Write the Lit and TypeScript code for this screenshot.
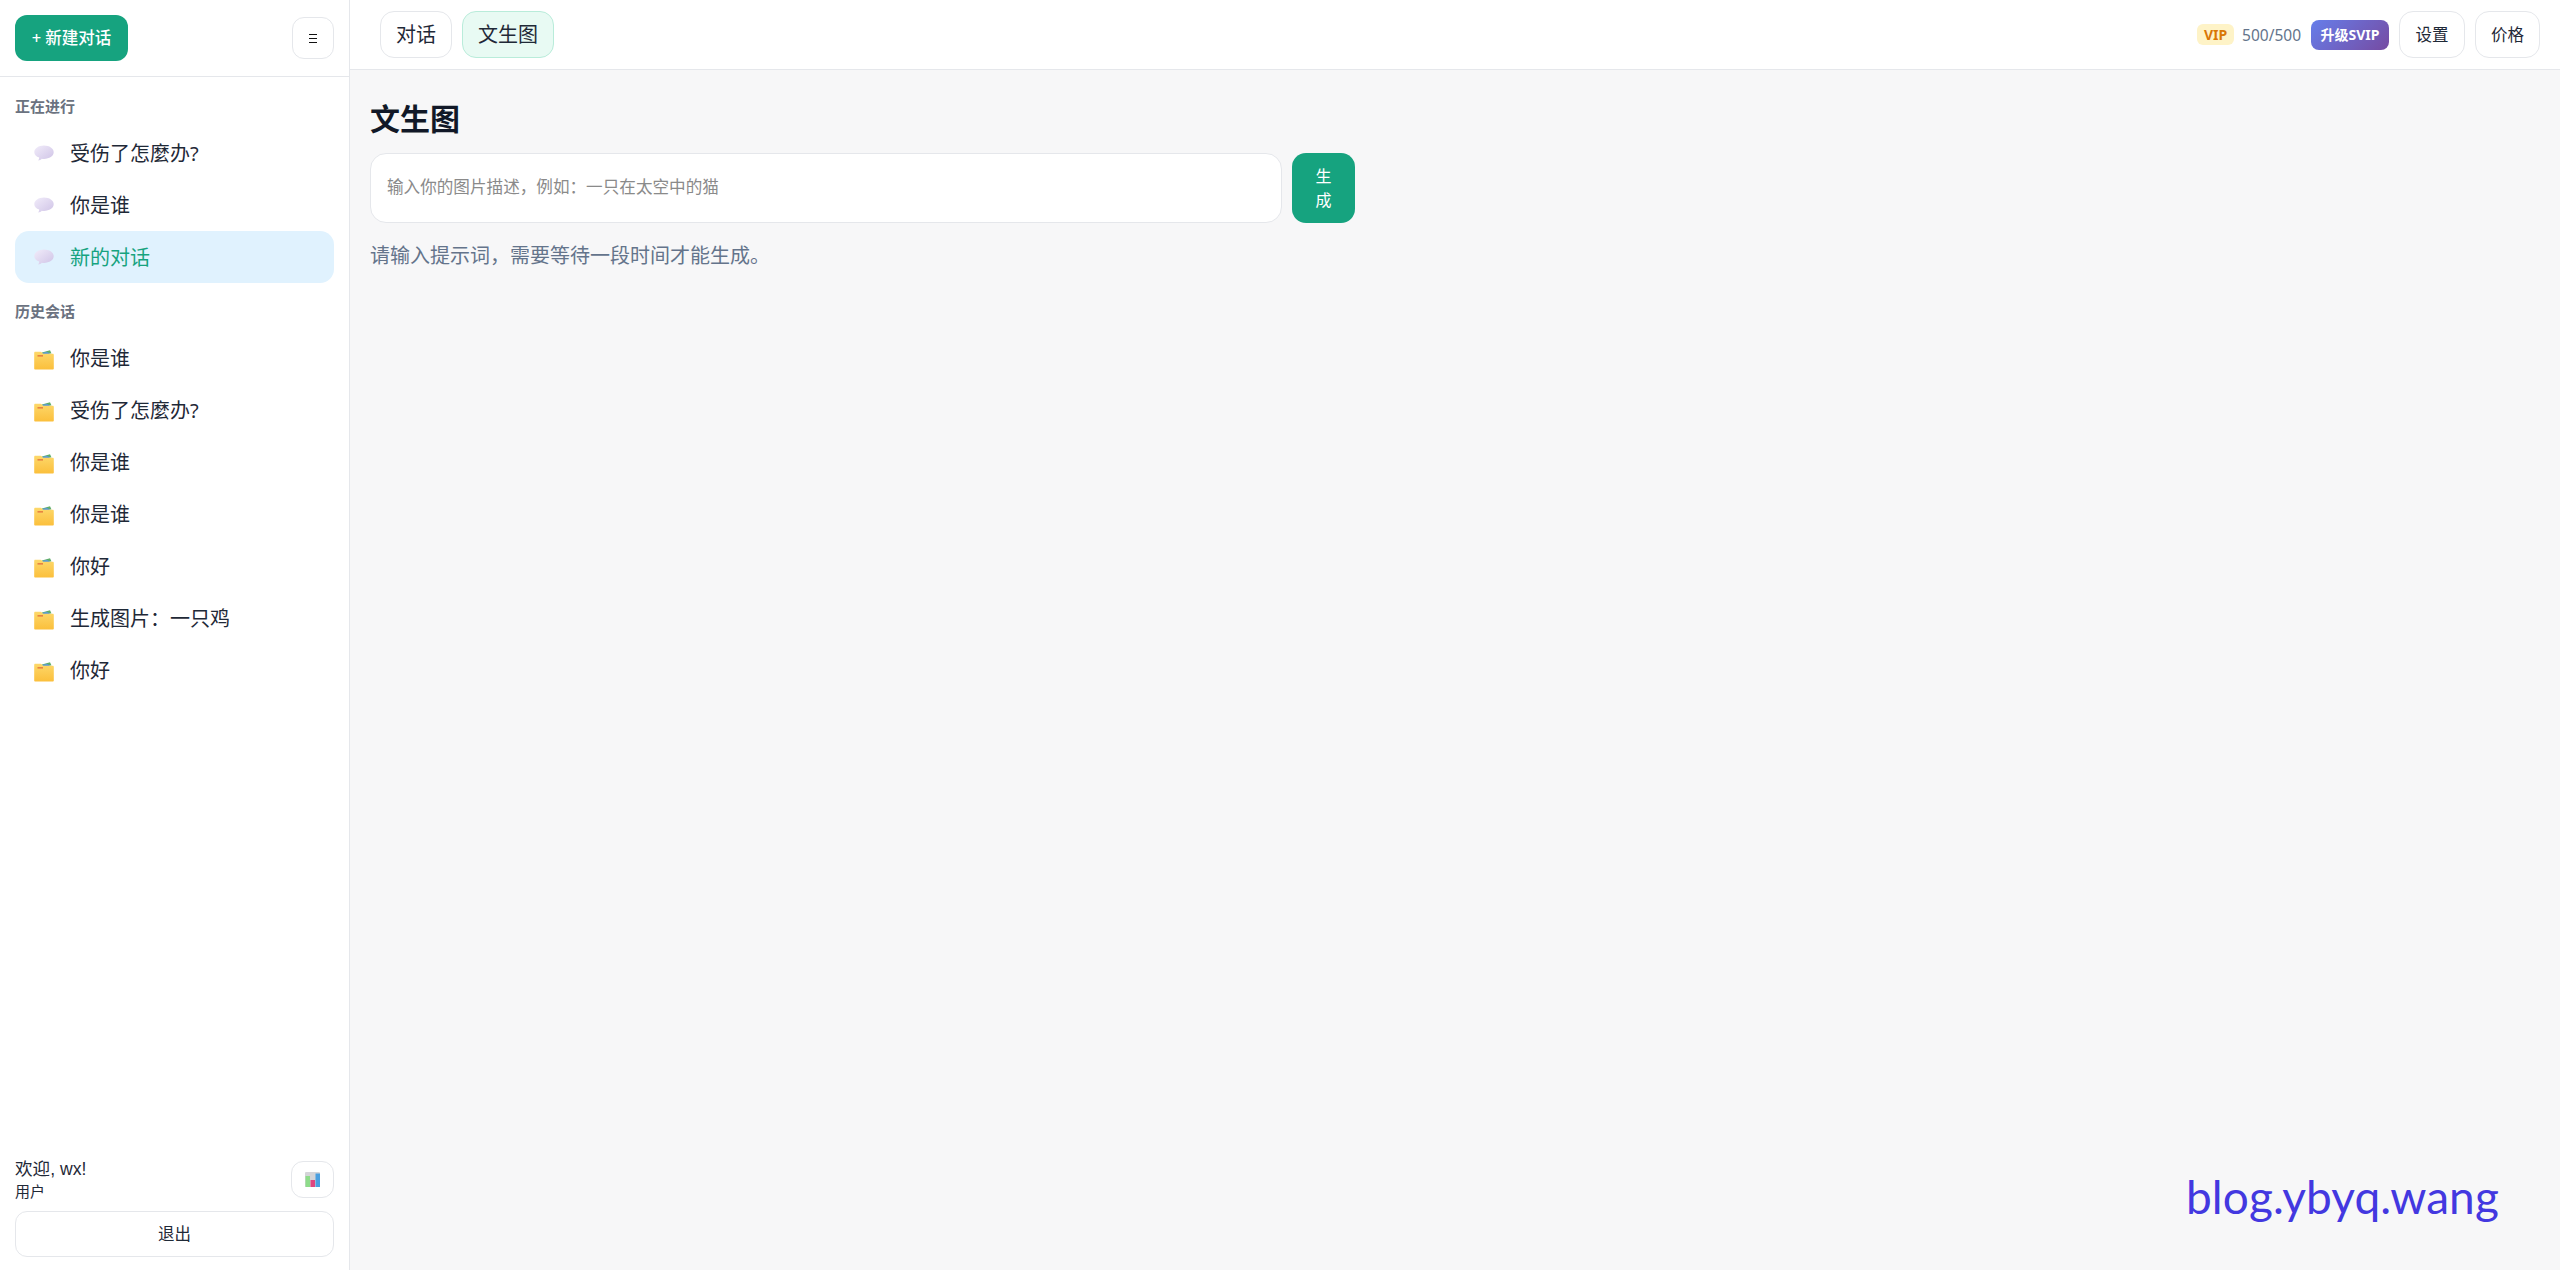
import { LitElement, html, css, svg } from "lit";
import { customElement } from "lit/decorators.js";

const bubble = html`<svg class="ico" viewBox="0 0 20 20"><defs><linearGradient id="bb" x1="0" y1="0" x2="1" y2="1"><stop offset="0" stop-color="#f1ecfa"/><stop offset="1" stop-color="#cfc3e6"/></linearGradient></defs><path d="M10 2.600c5.300 0 9.700 2.900 9.700 6.700s-4.400 6.600-9.700 6.600c-.8 0-1.500-.1-2.200-.2-.9 1-2.200 1.700-3.600 1.800.6-.8 1-1.700 1-2.900C2.400 13.700.3 11.600.3 9.300.3 5.500 4.700 2.600 10 2.600z" fill="url(#bb)"/></svg>`;

const folder = html`<svg class="ico folder" viewBox="0 0 20 20"><defs><linearGradient id="ff" x1="0" y1="0" x2="0" y2="1"><stop offset="0" stop-color="#fdd86a"/><stop offset="1" stop-color="#fbbf3c"/></linearGradient></defs><path d="M8 2.500 L16 .3 l1.500 3.200H8z" fill="#5fae6a"/><path d="M7 3.200 L13 1.800 l3.500 2.200H7z" fill="#5b9bd5"/><path d="M1.200 1.800h5.400c.6 0 1 .2 1.300.6l1.200 1.400h9.600c.7 0 1.100.5 1.100 1.200v13.400c0 .7-.5 1.100-1.200 1.100H1.400c-.7 0-1.200-.4-1.200-1.100V2.900c0-.6.400-1.100 1-1.100z" fill="url(#ff)"/><rect x="3.500" y="5.200" width="5.500" height="1.300" fill="#e2703a"/></svg>`;

const chart = svg`<rect x="0" y="0" width="15" height="15" rx="1" fill="#d4d4d8"/><rect x="0.500" y="4" width="4.500" height="11" fill="#8edc8a"/><rect x="5.500" y="8" width="4.500" height="7" fill="#e0457f"/><rect x="10.500" y="1.500" width="4.500" height="13.500" fill="#4a9fe0"/>`;

@customElement("app-root")
export class AppRoot extends LitElement {
  static styles = css`
    :host {
      display: block;
      height: 100vh;
      font-family: "Noto Sans", "Noto Sans CJK SC", sans-serif;
      color: #1f2937;
    }
    * { box-sizing: border-box; }
    .app { display: flex; height: 100%; position: relative; background: #f7f7f8; }
    .side {
      width: 350px;
      flex: none;
      background: #fff;
      border-right: 1px solid #e5e7eb;
      display: flex;
      flex-direction: column;
    }
    .side-head {
      height: 77px;
      padding: 15px 15px 0;
      border-bottom: 1px solid #e5e7eb;
      display: flex;
      justify-content: space-between;
      align-items: flex-start;
    }
    .new {
      width: 113px;
      height: 46px;
      border-radius: 12px;
      background: #16a37f;
      color: #fff;
      font-size: 16.500px;
      font-weight: 500;
      line-height: 45px;
      text-align: center;
    }
    .menu {
      width: 42px;
      height: 42px;
      margin-top: 2px;
      border: 1px solid #e5e7eb;
      border-radius: 12px;
      display: flex;
      flex-direction: column;
      gap: 3px;
      align-items: center;
      justify-content: center;
    }
    .menu i { display: block; width: 8px; height: 1px; background: #111; }
    .lists { flex: 1; padding: 17px 15px 0; }
    .label {
      font-size: 15px;
      line-height: 24px;
      font-weight: 700;
      color: #6b7280;
      margin-bottom: 9px;
    }
    .group { margin-bottom: 16px; }
    .row {
      height: 52px;
      border-radius: 14px;
      padding-left: 19px;
      display: flex;
      align-items: center;
      gap: 16px;
      font-size: 20px;
      line-height: 51px;
    }
    .row.on { background: #e0f2fe; color: #16a37f; }
    .ico { width: 20px; height: 20px; flex: none; }
    .folder { margin-top: 3px; }
    .foot { padding: 0 15px 13px; }
    .user { display: flex; justify-content: space-between; align-items: center; margin-bottom: 11px; }
    .hello { font-family: "Liberation Sans", "Noto Sans CJK SC", sans-serif; font-size: 17.600px; line-height: 22px; }
    .role { font-size: 15px; line-height: 18px; margin-top: 2px; }
    .stat {
      width: 43px;
      height: 37px;
      border: 1px solid #e5e7eb;
      border-radius: 12px;
      display: flex;
      align-items: center;
      justify-content: center;
    }
    .stat svg { width: 15px; height: 15px; }
    .logout {
      height: 46px;
      border: 1px solid #e5e7eb;
      border-radius: 12px;
      line-height: 44px;
      text-align: center;
      font-size: 16.500px;
    }
    .main { flex: 1; display: flex; flex-direction: column; min-width: 0; }
    .top {
      height: 70px;
      background: #fff;
      border-bottom: 1px solid #e5e7eb;
      padding: 0 20px 0 30px;
      display: flex;
      align-items: center;
      gap: 10px;
    }
    .btn {
      height: 47px;
      border: 1px solid #e5e7eb;
      border-radius: 14px;
      background: #fff;
      line-height: 45px;
      text-align: center;
    }
    .tab { font-size: 20px; padding: 0 15px; }
    .tab.on { background: #e8faf3; border-color: #b9ecda; }
    .spacer { flex: 1; }
    .vip {
      background: #fef3c7;
      color: #d97706;
      font-size: 14px;
      font-weight: 700;
      width: 37px;
      height: 21px;
      border-radius: 6px;
      line-height: 21px;
      text-align: center;
      margin-right: -2px;
    }
    .count { font-size: 15.500px; color: #64748b; }
    .up {
      width: 78px;
      height: 30px;
      border-radius: 8px;
      background: linear-gradient(135deg, #667eea, #764ba2);
      color: #fff;
      font-size: 14px;
      font-weight: 700;
      line-height: 30px;
      text-align: center;
    }
    .act { font-size: 16.500px; width: 66px; }
    .act.narrow { width: 65px; }
    .body { padding: 30px 20px; }
    h1 { margin: 0 0 15px; font-size: 30px; line-height: 38px; font-weight: 700; color: #111827; }
    .form { display: flex; gap: 10px; align-items: stretch; }
    .input {
      width: 912px;
      height: 70px;
      background: #fff;
      border: 1px solid #e5e7eb;
      border-radius: 16px;
      padding-left: 16px;
      line-height: 66px;
      font-size: 16.600px;
      color: #8a8a8a;
    }
    .go {
      width: 63px;
      border-radius: 14px;
      background: #16a37f;
      color: #fff;
      font-size: 16px;
      line-height: 24px;
      display: flex;
      align-items: center;
      justify-content: center;
      text-align: center;
      padding: 0 20px;
    }
    .hint { margin-top: 20px; font-size: 20px; line-height: 26px; color: #64748b; }
    .mark {
      position: absolute;
      left: 2186px;
      top: 1169px;
      font-family: "Lato", sans-serif;
      font-size: 46px;
      line-height: 56px;
      letter-spacing: 0.100px;
      color: #4338e0;
      white-space: nowrap;
    }
  `;

  render() {
    const active = ["受伤了怎麼办?", "你是谁", "新的对话"];
    const hist = ["你是谁", "受伤了怎麼办?", "你是谁", "你是谁", "你好", "生成图片：一只鸡", "你好"];
    return html`<div class="app">
      <aside class="side">
        <div class="side-head">
          <div class="new">+ 新建对话</div>
          <div class="menu"><i></i><i></i><i></i></div>
        </div>
        <div class="lists">
          <div class="group">
            <div class="label">正在进行</div>
            ${active.map((t, i) => html`<div class="row ${i === 2 ? "on" : ""}">${bubble}<span>${t}</span></div>`)}
          </div>
          <div class="group">
            <div class="label">历史会话</div>
            ${hist.map((t) => html`<div class="row">${folder}<span>${t}</span></div>`)}
          </div>
        </div>
        <div class="foot">
          <div class="user">
            <div><div class="hello">欢迎, wx!</div><div class="role">用户</div></div>
            <div class="stat"><svg viewBox="0 0 15 15">${chart}</svg></div>
          </div>
          <div class="logout">退出</div>
        </div>
      </aside>
      <main class="main">
        <div class="top">
          <div class="btn tab">对话</div>
          <div class="btn tab on">文生图</div>
          <div class="spacer"></div>
          <div class="vip">VIP</div>
          <div class="count">500/500</div>
          <div class="up">升级SVIP</div>
          <div class="btn act">设置</div>
          <div class="btn act narrow">价格</div>
        </div>
        <div class="body">
          <h1>文生图</h1>
          <div class="form">
            <div class="input">输入你的图片描述，例如：一只在太空中的猫</div>
            <div class="go">生成</div>
          </div>
          <div class="hint">请输入提示词，需要等待一段时间才能生成。</div>
        </div>
      </main>
      <div class="mark">blog.ybyq.wang</div>
    </div>`;
  }
}
